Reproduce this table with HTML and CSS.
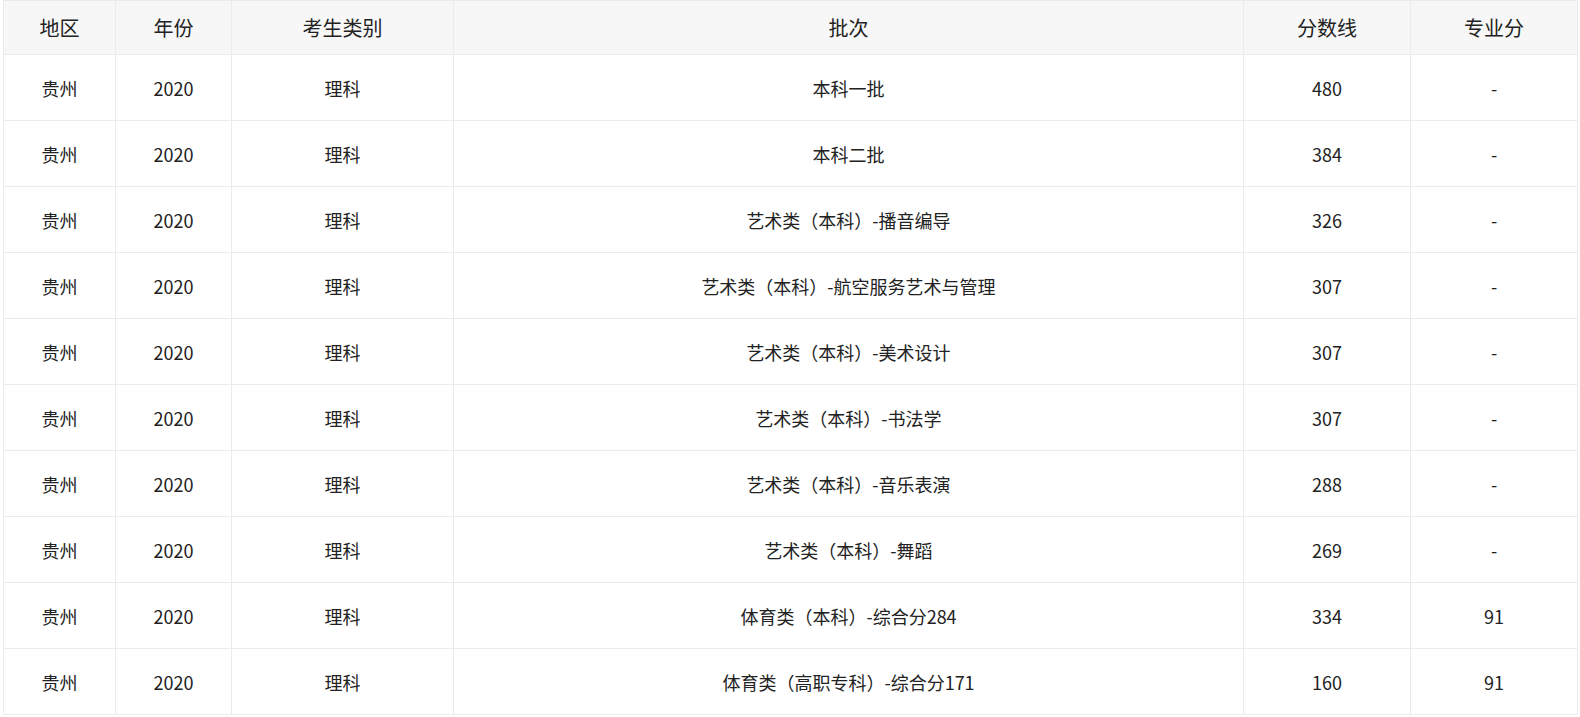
FILE: index.html
```html
<!DOCTYPE html>
<html lang="zh-CN">
<head>
<meta charset="utf-8">
<title>分数线</title>
<link rel="stylesheet" href="styles.css">
</head>
<body>
<table class="score-table">
  <colgroup>
    <col class="c1"><col class="c2"><col class="c3"><col class="c4"><col class="c5"><col class="c6">
  </colgroup>
  <thead>
    <tr><th>地区</th><th>年份</th><th>考生类别</th><th>批次</th><th>分数线</th><th>专业分</th></tr>
  </thead>
  <tbody>
    <tr><td>贵州</td><td>2020</td><td>理科</td><td>本科一批</td><td>480</td><td>-</td></tr>
    <tr><td>贵州</td><td>2020</td><td>理科</td><td>本科二批</td><td>384</td><td>-</td></tr>
    <tr><td>贵州</td><td>2020</td><td>理科</td><td>艺术类（本科）-播音编导</td><td>326</td><td>-</td></tr>
    <tr><td>贵州</td><td>2020</td><td>理科</td><td>艺术类（本科）-航空服务艺术与管理</td><td>307</td><td>-</td></tr>
    <tr><td>贵州</td><td>2020</td><td>理科</td><td>艺术类（本科）-美术设计</td><td>307</td><td>-</td></tr>
    <tr><td>贵州</td><td>2020</td><td>理科</td><td>艺术类（本科）-书法学</td><td>307</td><td>-</td></tr>
    <tr><td>贵州</td><td>2020</td><td>理科</td><td>艺术类（本科）-音乐表演</td><td>288</td><td>-</td></tr>
    <tr><td>贵州</td><td>2020</td><td>理科</td><td>艺术类（本科）-舞蹈</td><td>269</td><td>-</td></tr>
    <tr><td>贵州</td><td>2020</td><td>理科</td><td>体育类（本科）-综合分284</td><td>334</td><td>91</td></tr>
    <tr><td>贵州</td><td>2020</td><td>理科</td><td>体育类（高职专科）-综合分171</td><td>160</td><td>91</td></tr>
  </tbody>
</table>
</body>
</html>
```
FILE: styles.css
```css
html, body {
  margin: 0;
  padding: 0;
  background: #fff;
}
body {
  padding: 0 3px;
  font-family: "Noto Sans CJK SC", "Noto Sans", sans-serif;
  color: #222;
}
.score-table {
  width: 1574px;
  border-collapse: collapse;
  table-layout: fixed;
}
.c1 { width: 112px; }
.c2 { width: 116px; }
.c3 { width: 222px; }
.c4 { width: 790px; }
.c5 { width: 167px; }
.c6 { width: 167px; }
.score-table th,
.score-table td {
  border: 1px solid #ebebeb;
  text-align: center;
  vertical-align: middle;
  padding: 0;
}
.score-table th {
  height: 53px;
  background: #f7f7f7;
  font-size: 20px;
  font-weight: normal;
}
.score-table td {
  height: 65px;
  font-size: 18px;
}
```
